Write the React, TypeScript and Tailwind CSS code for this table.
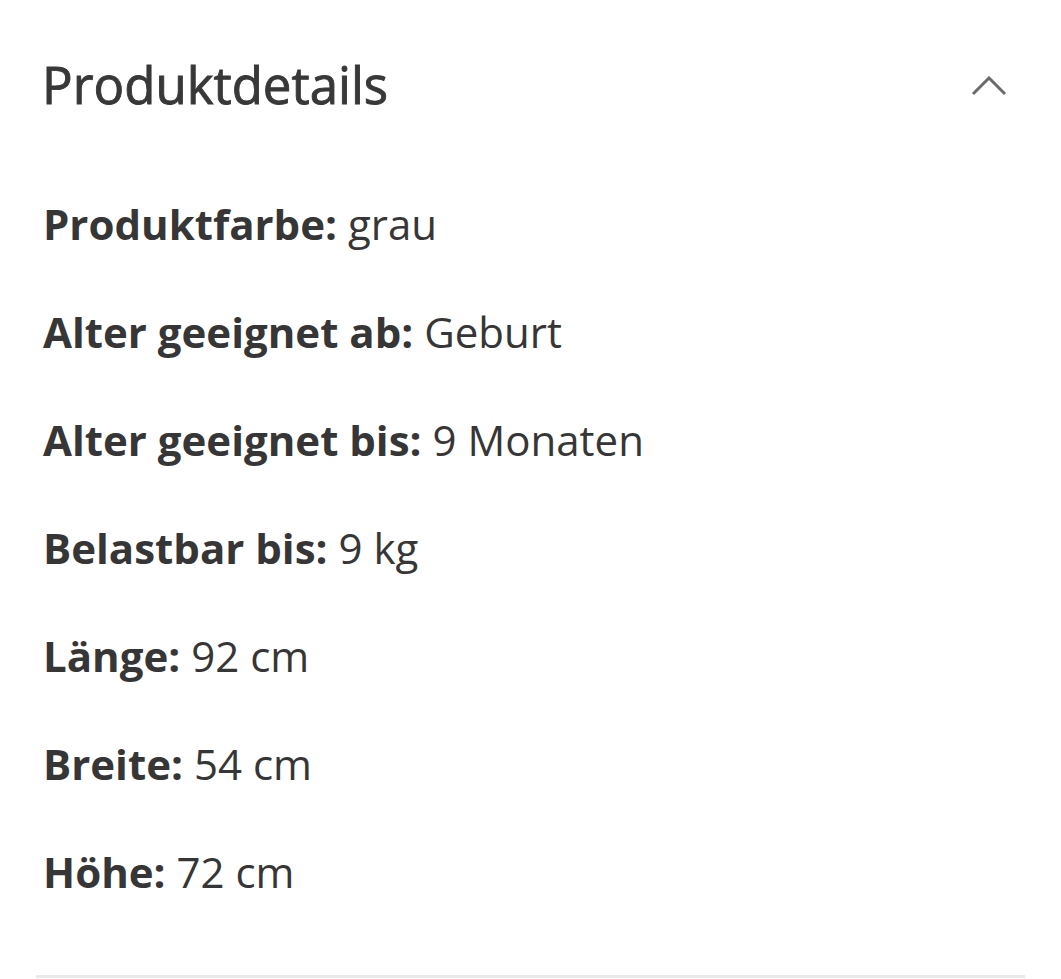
import React from "react";

const rows: [string, string][] = [
  ["Produktfarbe:", "grau"],
  ["Alter geeignet ab:", "Geburt"],
  ["Alter geeignet bis:", "9 Monaten"],
  ["Belastbar bis:", "9 kg"],
  ["Länge:", "92 cm"],
  ["Breite:", "54 cm"],
  ["Höhe:", "72 cm"],
];

export default function App() {
  return (
    <div
      className="w-[1061px] h-[979px] bg-white text-[#363636] overflow-hidden"
      style={{ fontFamily: '"Open Sans", "Noto Sans", sans-serif' }}
    >
      <div className="px-[36px]">
        <div className="flex items-center justify-between pt-[49px] pl-[6px] pr-[18px]">
          <h2 className="text-[51px] leading-[70px] font-normal text-[#383838] [-webkit-text-stroke:0.9px_#383838]">
            Produktdetails
          </h2>
          <svg width="36" height="20" viewBox="0 0 36 20" className="mt-[4px]">
            <path d="M2 18 L18 2 L34 18" fill="none" stroke="#6b6b6b" strokeWidth="3" />
          </svg>
        </div>
        <div className="mt-[51px] pl-[7px]">
          {rows.map(([k, v]) => (
            <div key={k} className="h-[108px] flex items-center text-[42px] leading-[108px]">
              <span className="font-bold">{k}</span>
              <span className="ml-[11px]">{v}</span>
            </div>
          ))}
        </div>
        <div className="mt-[49px] h-[3px] bg-[#e9e9e9]" />
      </div>
    </div>
  );
}
